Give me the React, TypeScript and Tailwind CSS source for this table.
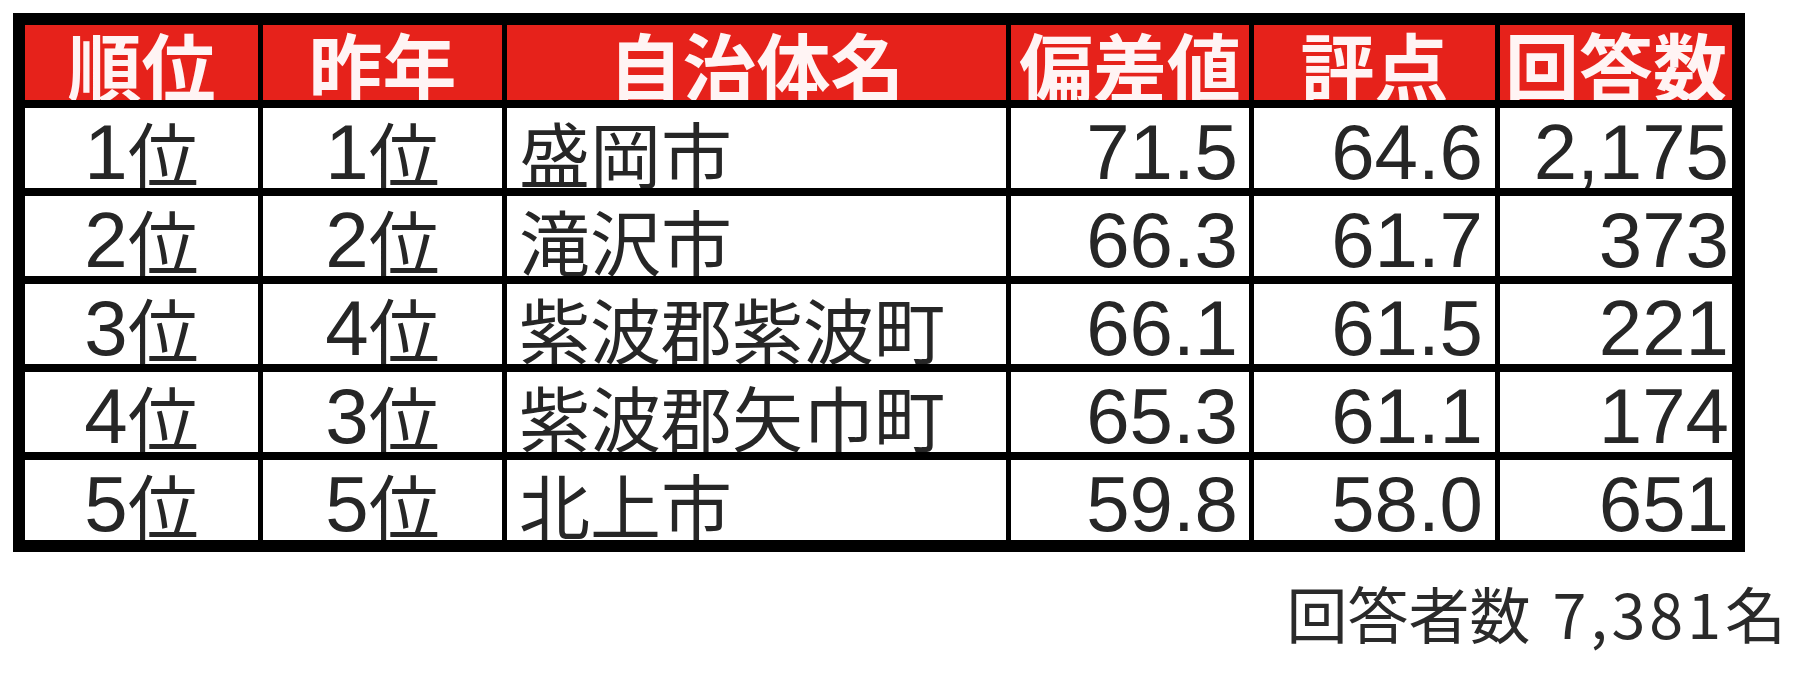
import React from 'react';

type Row = {
  rank: string;
  prev: string;
  name: string;
  score: string;
  point: string;
  count: string;
};

const rows: Row[] = [
  { rank: '1位', prev: '1位', name: '盛岡市', score: '71.5', point: '64.6', count: '2,175' },
  { rank: '2位', prev: '2位', name: '滝沢市', score: '66.3', point: '61.7', count: '373' },
  { rank: '3位', prev: '4位', name: '紫波郡紫波町', score: '66.1', point: '61.5', count: '221' },
  { rank: '4位', prev: '3位', name: '紫波郡矢巾町', score: '65.3', point: '61.1', count: '174' },
  { rank: '5位', prev: '5位', name: '北上市', score: '59.8', point: '58.0', count: '651' },
];

const headers = ['順位', '昨年', '自治体名', '偏差値', '評点', '回答数'];

// digits stay in the cell font, kanji runs get their own size so both sit like the sheet
function Mixed({ text }: { text: string }) {
  const parts = text.split(/([\u3000-\u9fff]+)/).filter(Boolean);
  return (
    <>
      {parts.map((p, i) =>
        /[\u3000-\u9fff]/.test(p) ? (
          <span key={i} className="text-[71px] font-['Noto_Sans_CJK_JP',sans-serif]">
            {p}
          </span>
        ) : (
          <span key={i}>{p}</span>
        )
      )}
    </>
  );
}

const cellBase =
  "flex h-[80px] items-center overflow-hidden bg-white pt-[7px] text-[78px] leading-none text-[#262626] font-['Liberation_Sans','Noto_Sans_CJK_JP',sans-serif]";

export default function App() {
  return (
    <div className="min-h-[681px] w-[1800px] bg-white pl-[13px] pt-[13px]">
      {/* Ranking table */}
      <div className="grid w-fit grid-cols-[233px_239px_499px_238px_241px_232px] gap-x-[5px] gap-y-[8px] bg-black pb-[12px] pl-[12px] pr-[13px] pt-[12px]">
        {headers.map((h) => (
          <div
            key={h}
            className="flex h-[75px] justify-center overflow-hidden bg-[#e6221b] pt-[1px] text-[74px] font-bold leading-[75px] text-[#fff4f4] font-['Noto_Sans_CJK_JP',sans-serif]"
          >
            {h}
          </div>
        ))}

        {rows.map((r) => (
          <React.Fragment key={r.rank}>
            <div className={`${cellBase} justify-center`}>
              <Mixed text={r.rank} />
            </div>
            <div className={`${cellBase} justify-center`}>
              <Mixed text={r.prev} />
            </div>
            <div className={`${cellBase} justify-start pl-[12px]`}>
              <Mixed text={r.name} />
            </div>
            <div className={`${cellBase} justify-end pr-[11px]`}>{r.score}</div>
            <div className={`${cellBase} justify-end pr-[12px]`}>{r.point}</div>
            <div className={`${cellBase} justify-end pr-[3px]`}>{r.count}</div>
          </React.Fragment>
        ))}
      </div>

      {/* Total respondents */}
      <div className="mt-[30px] flex justify-end pr-[10px] text-[61px] leading-none text-[#2a2a2a] font-['Noto_Sans_CJK_JP',sans-serif]">
        <span>回答者数</span>
        <span className="ml-[22px] tracking-[4px]">7,381名</span>
      </div>
    </div>
  );
}
